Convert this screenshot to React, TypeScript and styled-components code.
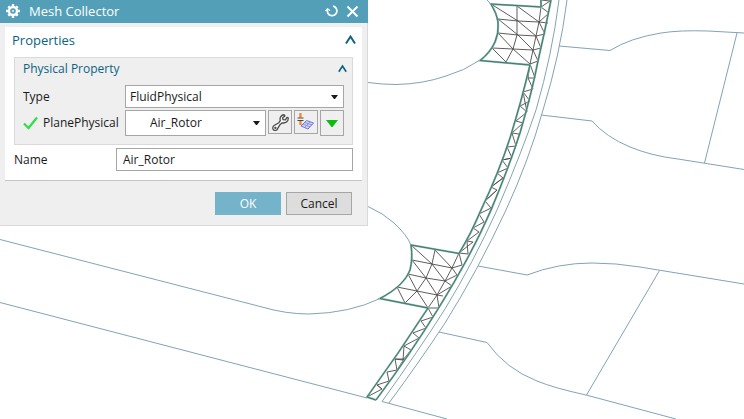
import React from "react";
import styled, { createGlobalStyle } from "styled-components";

const GlobalStyle = createGlobalStyle`
  *, *::before, *::after { box-sizing: border-box; }
  body { margin: 0; background: #ffffff; }
  body, button, input, select { font-family: "Open Sans", "Noto Sans", sans-serif; }
`;

const Workspace = styled.main`
  position: relative;
  min-height: 100vh;
  overflow: hidden;
`;

const Viewport = styled.svg`
  position: absolute;
  inset: 0;
  width: 100%;
  height: 100%;
  fill: none;
`;

const Dialog = styled.section`
  position: relative;
  width: 100%;
  max-width: 368px;
  background: #efefef;
  border-bottom: 1px solid #d9d9d9;
  color: #1a1a1a;
  font-size: 12px;
  line-height: 16px;
`;

const TitleBar = styled.header`
  display: flex;
  align-items: center;
  gap: 7px;
  height: 23px;
  padding: 0 9px 1px 6px;
  background: #549fb8;
  color: #ffffff;
`;

const Title = styled.h1`
  flex: 1;
  margin: 0 0 0 2px;
  font-size: 13px;
  font-weight: 400;
  line-height: 20px;
`;

const BareButton = styled.button`
  display: flex;
  padding: 0;
  border: 0;
  background: none;
  color: inherit;
`;

const Body = styled.form`
  margin: 0;
  padding: 4px 5px 10px;
  border-right: 1px solid #d9d9d9;
`;

const Panel = styled.div`
  padding: 3px 9px 9px;
  background: #ffffff;
  border-bottom: 1px solid #c4c4c4;
`;

const Heading = styled.div<{ $level: "panel" | "group" }>`
  display: flex;
  align-items: center;
  justify-content: space-between;
  color: #0b6384;
  height: ${(p) => (p.$level === "panel" ? 19 : 21)}px;
  margin: ${(p) => (p.$level === "panel" ? "0 -3px 8px -2px" : "0 -3px 6px 0")};

  h2, h3 {
    margin: 0;
    font-size: ${(p) => (p.$level === "panel" ? 13 : 12)}px;
    font-weight: 400;
  }
`;

const Group = styled.div`
  padding: 0 8px 8px;
  background: #efefef;
  border: 1px solid #dadada;
`;

const Row = styled.div`
  display: flex;
  align-items: center;
  gap: 2px;
  & + & { margin-top: 2px; }
`;

const RowLabel = styled.label`
  display: flex;
  align-items: center;
  gap: 4px;
  width: 100px;
  white-space: nowrap;
`;

const SelectBox = styled.div<{ $tall?: boolean }>`
  position: relative;
  flex: 1;
  height: ${(p) => (p.$tall ? 26 : 23)}px;

  svg {
    position: absolute;
    right: 6px;
    top: 0;
    bottom: 0;
    margin: auto;
    pointer-events: none;
  }
`;

const Select = styled.select<{ $indent?: boolean }>`
  appearance: none;
  width: 100%;
  height: 100%;
  padding: 0 16px ${(p) => (p.$indent ? 2 : 0)}px ${(p) => (p.$indent ? 24 : 4)}px;
  border: 1px solid #a6a6a6;
  border-radius: 0;
  background: #ffffff;
  color: #1a1a1a;
  font-size: 12px;
`;

const ToolButton = styled.button<{ $tall?: boolean }>`
  display: flex;
  align-items: center;
  justify-content: center;
  align-self: flex-start;
  width: 24px;
  height: ${(p) => (p.$tall ? 26 : 24)}px;
  padding: 0;
  border: 1px solid #a6a6a6;
  background: #efefef;
`;

const NameRow = styled.div`
  display: flex;
  align-items: center;
  margin-top: 3px;

  label { width: 102px; }
`;

const TextInput = styled.input`
  flex: 1;
  min-width: 0;
  height: 23px;
  padding: 0 6px;
  border: 1px solid #a6a6a6;
  color: #1a1a1a;
  font-size: 12px;
`;

const Actions = styled.footer`
  display: flex;
  justify-content: flex-end;
  gap: 5px;
  padding: 11px 10px 0 0;
`;

const ActionButton = styled.button<{ $primary?: boolean }>`
  width: 66px;
  height: 23px;
  padding: 0;
  border: 1px solid ${(p) => (p.$primary ? "#74b3ca" : "#a6a6a6")};
  background: ${(p) => (p.$primary ? "#74b3ca" : "#dddddd")};
  color: ${(p) => (p.$primary ? "#ffffff" : "#1a1a1a")};
  font-size: 12px;
  line-height: 16px;
`;

const outlines = [
  "M0 239.5L262 307Q286 314 309 314Q350 313 380 298.5",
  "M0 302.5L367 398",
  "M368 206.5Q383 213 394 223Q407 235 411 245",
  "M368 82.5Q383 84.500 396 84.500Q423 84 446 76Q464 71 480 60",
  "M487 0L491 4",
  "M559 0Q552 55 536 110Q522 152 497 210Q473 263 445 309Q419 350 382 401.500L447 419",
  "M567 0Q560 55 543 110Q529 160 506 210Q477 272 445 323Q420 361 389 403",
  "M559 46L610 50.500Q630 38 661 33Q680 30 708 31L744 33",
  "M541 115L592 121Q606 137 630 147Q652 156 678 159L744 169.500",
  "M737 33L704.500 163",
  "M478 266L527 275Q558 263 592 263Q616 263 640 267L744 284",
  "M659.500 270.500L586.500 395",
  "M439 332L487 342.500Q506 369 537 381Q554 388 586 395L676 419",
];

const meshEdges = [
  // upper pocket
  "M491 4L518 21L536 36L545 34M517 6V35L513 49L506 62L492 48M517 6L539 22M498 19L518 21L539 22L548 23M498 19L518 35L533 50L541 48M498 33L518 35L536 36M498 33L513 49L530 64M492 48L513 49L533 50",
  "M541 7L539 22L536 36L533 50L530 64L538 61L533 50M541 48L536 36M545 34L539 22L549 13L541 7L550 1L541 0",
  // strip between the pockets
  "M530 64L535 78H528L530 64M528 78L533 89L523 92L530 101L520 106L527 112L516 121L523 123L512 133L519 134L516 146L507 147L512 158L502 160L508 168L497 173L503 178L491 187L497 190L485 201L491 208L479 214L484 222L473 228L479 232L467 241L473 242L459 253L468 254L467 241",
  "M523 92L527 112M512 133L516 146M502 160L512 158M491 187L503 178M485 201L497 190",
  // lower pocket
  "M411 245L432 264L445 281L457 275M435 250L432 264L426 278L417 291L405 303L397 287M435 250L452 268L462 265M412 260L432 264L452 268M412 260L426 278L437 295L443 296M408 274L426 278L445 281M408 274L417 291L428 308M397 287L417 291L437 295",
  "M459 253L452 268L445 281L437 295L428 308H439L437 295L452 286L445 281M457 275L452 268M459 253L462 265",
  // lower strip
  "M428 308L433 317L421 321L426 328L413 333L419 338L404 346L411 350L403 360L395 359H404L397 370L387 372L389 381L377 385L382 389L367 397",
  "M404 346L403 360M395 359L397 370M377 385L382 389",
];

const meshBorders = [
  "M541 0V7L491 4Q497 14 498 22Q499 33 495 42Q490 53 480 60.500L530 65Q521 103 510 138Q499 172 481 210Q471 234 459 253.500L411 245Q413 259 410 270Q404 286 380 298.500L428 308Q399 353 367 397L376 400",
  "M551 0Q545 31 538 61Q532 92 520 133Q509 167 491 210Q471 256 438 309Q411 353 376 400",
];

const Model = () => (
  <Viewport viewBox="0 0 744 419" preserveAspectRatio="xMinYMin slice" aria-hidden="true">
    <g stroke="#83a3b5" strokeWidth="1">
      {outlines.map((d) => <path key={d} d={d} />)}
    </g>
    <g stroke="#4e4a4a" strokeWidth="0.9">
      {meshEdges.map((d) => <path key={d} d={d} />)}
    </g>
    {meshBorders.map((d) => (
      <g key={d}>
        <path d={d} stroke="#86afb0" strokeWidth="2" />
        <path d={d} stroke="#3d7d62" strokeWidth="1" />
      </g>
    ))}
  </Viewport>
);

const GearIcon = () => (
  <svg width="14" height="14" viewBox="0 0 14 14" fill="none" stroke="#fff">
    <circle cx="7" cy="7" r="4" strokeWidth="2.400" />
    <circle cx="7" cy="7" r="0.900" fill="#fff" stroke="none" />
    <path d="M7 0V2.500M7 11.500V14M0 7H2.500M11.500 7H14M2.300 2.300L3.800 3.800M10.200 10.200L11.700 11.700M11.700 2.300L10.200 3.800M3.800 10.200L2.300 11.700" strokeWidth="2.400" />
  </svg>
);

const ResetIcon = () => (
  <svg width="14" height="14" viewBox="0 0 14 14" fill="none" stroke="#fff" strokeWidth="1.700">
    <path d="M8 2.200A4.800 4.800 0 1 1 2.500 5.500" />
    <path d="M0.500 7L2.500 4.800L5 6.500" strokeWidth="1.300" />
  </svg>
);

const CloseIcon = () => (
  <svg width="13" height="13" viewBox="0 0 13 13" stroke="#fff" strokeWidth="2">
    <path d="M1.500 1.500L11.500 11.500M11.500 1.500L1.500 11.500" />
  </svg>
);

const Chevron = ({ size }: { size: number }) => (
  <svg width={size} height={size} viewBox="0 0 11 11" fill="none" stroke="#0b6384" strokeWidth="2">
    <path d="M1 9.500L5.500 2.500L10 9.500" />
  </svg>
);

const DropArrow = () => (
  <svg width="7" height="4" viewBox="0 0 7 4" aria-hidden="true">
    <path d="M0 0H7L4 4H3Z" fill="#1a1a1a" />
  </svg>
);

const CheckIcon = () => (
  <svg width="16" height="14" viewBox="0 0 16 14" fill="none" stroke="#2fdf45" strokeWidth="2.200" aria-hidden="true">
    <path d="M1 7.500L5.500 12L14 1.500" />
  </svg>
);

const WrenchIcon = () => (
  <svg width="17" height="17" viewBox="0 0 16 16" fill="#f6f6f6" stroke="#4a4a4a" strokeWidth="1.200" strokeLinejoin="round">
    <path d="M11.500 0.700C8.500 0.800 7 3.500 7.800 6.300L6.500 8.200L2 10.800C0.200 12 0.400 14.300 1.800 15.200C3.300 16 4.800 15.200 5.300 13.800L7.700 9.800L9.700 8.300C12.500 9 15.500 7.200 15.300 3.600L14.200 3.200L12.600 5.600L10.300 5.200L10 3.600L12.200 1.900Z" />
    <circle cx="3.200" cy="13" r="0.500" />
  </svg>
);

const MeshDataIcon = () => (
  <svg width="18" height="18" viewBox="0 0 18 18" fill="none">
    <path d="M4 13L9.500 7.500L16.500 10L11 16Z" fill="#d4d8fb" stroke="#6972d6" />
    <path d="M6 11L13 14M8 9.500L15 12M7.500 14.500L13 9" stroke="#7d86df" strokeWidth="0.900" />
    <path d="M3.500 0V4.500M3.500 8V12" stroke="#e8873d" strokeWidth="2.400" />
    <path d="M0.500 5H6.500M0.500 7.500H6.500" stroke="#4d4740" strokeWidth="1.100" />
    <path d="M4.500 0.500V4M4.500 8.500V12" stroke="#f3be55" strokeWidth="0.800" />
  </svg>
);

const GreenArrow = () => (
  <svg width="12" height="7" viewBox="0 0 12 7">
    <path d="M0 0H12L6.500 7H5.500Z" fill="#0dbd0d" />
  </svg>
);

export default function App() {
  return (
    <>
      <GlobalStyle />
      <Workspace>
        <Model />
        <Dialog role="dialog" aria-labelledby="dialog-title">
          <TitleBar>
            <BareButton type="button" aria-label="Dialog options"><GearIcon /></BareButton>
            <Title id="dialog-title">Mesh Collector</Title>
            <BareButton type="button" aria-label="Reset"><ResetIcon /></BareButton>
            <BareButton type="button" aria-label="Close"><CloseIcon /></BareButton>
          </TitleBar>
          <Body onSubmit={(event) => event.preventDefault()}>
            <Panel>
              <Heading $level="panel">
                <h2>Properties</h2>
                <BareButton type="button" aria-label="Collapse Properties"><Chevron size={11} /></BareButton>
              </Heading>
              <Group>
                <Heading $level="group">
                  <h3>Physical Property</h3>
                  <BareButton type="button" aria-label="Collapse Physical Property"><Chevron size={9} /></BareButton>
                </Heading>
                <Row>
                  <RowLabel htmlFor="type">Type</RowLabel>
                  <SelectBox>
                    <Select id="type"><option>FluidPhysical</option></Select>
                    <DropArrow />
                  </SelectBox>
                </Row>
                <Row>
                  <RowLabel htmlFor="plane"><CheckIcon />PlanePhysical</RowLabel>
                  <SelectBox $tall>
                    <Select id="plane" $indent><option>Air_Rotor</option></Select>
                    <DropArrow />
                  </SelectBox>
                  <ToolButton type="button" aria-label="Edit"><WrenchIcon /></ToolButton>
                  <ToolButton type="button" aria-label="Create physical"><MeshDataIcon /></ToolButton>
                  <ToolButton type="button" aria-label="More" $tall><GreenArrow /></ToolButton>
                </Row>
              </Group>
              <NameRow>
                <label htmlFor="name">Name</label>
                <TextInput id="name" defaultValue="Air_Rotor" />
              </NameRow>
            </Panel>
            <Actions>
              <ActionButton type="submit" $primary>OK</ActionButton>
              <ActionButton type="button">Cancel</ActionButton>
            </Actions>
          </Body>
        </Dialog>
      </Workspace>
    </>
  );
}
